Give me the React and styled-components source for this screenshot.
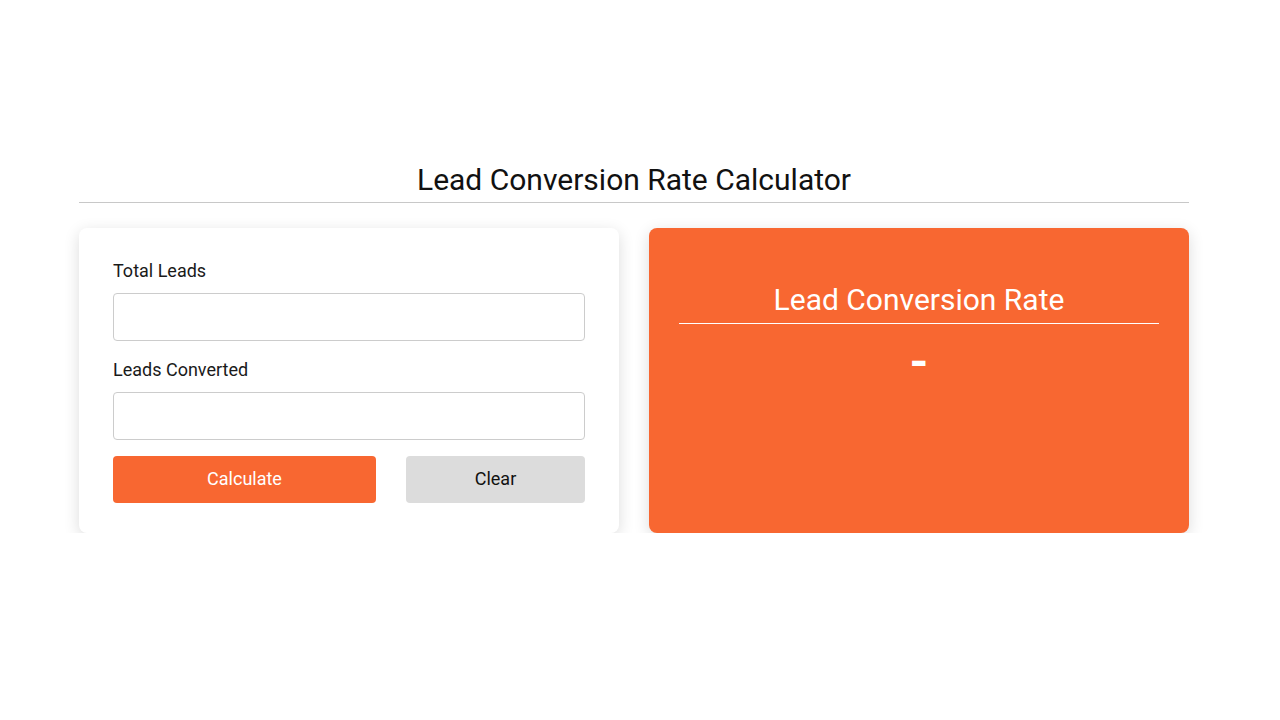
import React, { useState } from 'react';
import styled, { createGlobalStyle } from 'styled-components';

const GlobalStyle = createGlobalStyle`
  body {
    margin: 0;
    background: #ffffff;
    font-family: Roboto, "Liberation Sans", sans-serif;
    color: #111;
  }
`;

const Page = styled.div`
  width: 1110px;
  margin-left: 79px;
  padding-top: 160px;
`;

const Title = styled.h1`
  margin: 0;
  font-size: 30px;
  font-weight: 400;
  text-align: center;
  line-height: 40px;
  padding-bottom: 2px;
  border-bottom: 1px solid #c8c8c8;
`;

const Grid = styled.div`
  display: grid;
  grid-template-columns: 1fr 1fr;
  gap: 30px;
  margin-top: 25px;
`;

const Card = styled.div`
  background: #fff;
  border-radius: 8px;
  box-shadow: 0 4px 16px rgba(0, 0, 0, 0.14);
  padding: 33px 34px 30px;
`;

const Field = styled.div`
  display: flex;
  flex-direction: column;
  & + & {
    margin-top: 19px;
  }
`;

const Label = styled.label`
  font-size: 18px;
  line-height: 20px;
  color: #1a1a1a;
  margin-bottom: 12px;
`;

const Input = styled.input`
  box-sizing: border-box;
  height: 48px;
  width: 100%;
  border: 1px solid #cccccc;
  border-radius: 4px;
  font-size: 17px;
  padding: 0 12px;
  font-family: inherit;
  outline: none;
`;

const Buttons = styled.div`
  display: grid;
  grid-template-columns: 263px 179px;
  justify-content: space-between;
  margin-top: 16px;
`;

const Button = styled.button`
  height: 47px;
  border: none;
  border-radius: 4px;
  font-family: inherit;
  font-size: 18px;
  padding: 0 0 2px;
  cursor: pointer;
  background: ${(p) => (p.primary ? '#f86731' : '#dcdcdc')};
  color: ${(p) => (p.primary ? '#fff' : '#111')};
`;

const ResultCard = styled.div`
  background: #f86731;
  border-radius: 8px;
  box-shadow: 0 4px 16px rgba(0, 0, 0, 0.14);
  padding: 52px 30px 30px;
  color: #fff;
  text-align: center;
`;

const ResultTitle = styled.h2`
  margin: 0;
  font-size: 30px;
  font-weight: 400;
  line-height: 40px;
  padding-bottom: 3px;
  border-bottom: 1px solid #fff;
`;

const ResultValue = styled.div`
  margin-top: 18px;
  font-size: 48px;
  font-weight: 700;
  line-height: 40px;
`;

export default function App() {
  const [total, setTotal] = useState('');
  const [converted, setConverted] = useState('');
  const [rate, setRate] = useState(null);

  const calculate = () => {
    const t = parseFloat(total);
    const c = parseFloat(converted);
    if (t > 0 && c >= 0) setRate(((c / t) * 100).toFixed(2) + '%');
  };

  const clear = () => {
    setTotal('');
    setConverted('');
    setRate(null);
  };

  return (
    <>
      <GlobalStyle />
      <Page>
        <Title>Lead Conversion Rate Calculator</Title>
        <Grid>
          <Card>
            <Field>
              <Label>Total Leads</Label>
              <Input value={total} onChange={(e) => setTotal(e.target.value)} />
            </Field>
            <Field>
              <Label>Leads Converted</Label>
              <Input value={converted} onChange={(e) => setConverted(e.target.value)} />
            </Field>
            <Buttons>
              <Button primary onClick={calculate}>Calculate</Button>
              <Button onClick={clear}>Clear</Button>
            </Buttons>
          </Card>
          <ResultCard>
            <ResultTitle>Lead Conversion Rate</ResultTitle>
            <ResultValue>{rate || '-'}</ResultValue>
          </ResultCard>
        </Grid>
      </Page>
    </>
  );
}
